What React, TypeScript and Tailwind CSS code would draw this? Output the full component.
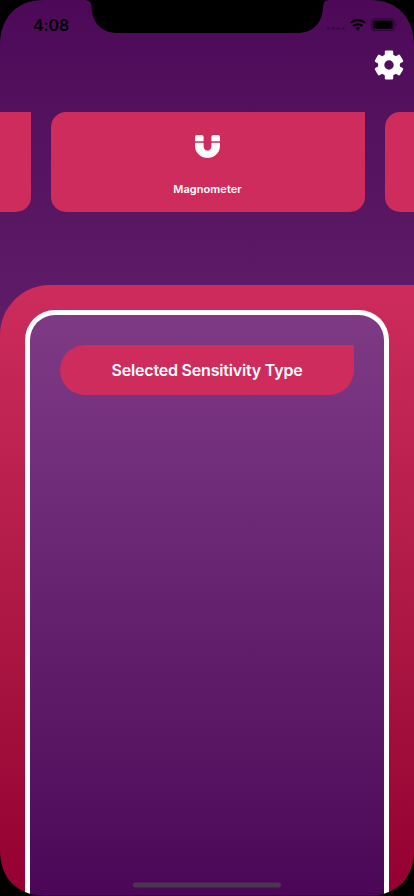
import { FaMagnet } from 'react-icons/fa';

function StatusBar() {
  return (
    <div className="flex h-[50px] shrink-0 items-start justify-between pl-[33px] pt-[15px] text-black">
      <span className="text-[16px] font-semibold leading-[20px] tracking-[-0.1px]">4:08</span>
      <svg width="88" height="20" viewBox="326 15 88 20">
        <g fill="#3a0744">
          <circle cx="328.3" cy="28.6" r="1.4" />
          <circle cx="333.3" cy="28.6" r="1.4" />
          <circle cx="338.3" cy="28.6" r="1.4" />
          <circle cx="343.3" cy="28.6" r="1.4" />
        </g>
        <g fill="none" stroke="#000" strokeWidth="2.1">
          <path d="M350.4 23.1a10.8 10.8 0 0 1 14.8 0" />
          <path d="M353.2 26a6.8 6.8 0 0 1 9.2 0" />
        </g>
        <path d="M357.8 30.4l-2.4-2.4a3.5 3.5 0 0 1 4.8 0z" />
        <rect x="371.8" y="18.8" width="22.4" height="11.6" rx="3" fill="none" stroke="#32063c" strokeWidth="1.2" />
        <rect x="373.3" y="20.4" width="19.4" height="8.4" rx="1.6" />
        <path d="M395.6 22.6c1.6.5 1.6 3.500 0 4z" fill="#32063c" />
      </svg>
    </div>
  );
}

function GearIcon() {
  return (
    <svg width="30" height="30" viewBox="-15 -15 30 30" fill="#fff">
      <circle r="7.8" fill="none" stroke="#fff" strokeWidth="6.2" />
      <rect x="-4.200" y="-14.500" width="8.400" height="7.500" rx="1.200" />
      <rect x="-4.200" y="-14.500" width="8.400" height="7.500" rx="1.200" transform="rotate(60)" />
      <rect x="-4.200" y="-14.500" width="8.400" height="7.500" rx="1.200" transform="rotate(120)" />
      <rect x="-4.200" y="-14.500" width="8.400" height="7.500" rx="1.200" transform="rotate(180)" />
      <rect x="-4.200" y="-14.500" width="8.400" height="7.500" rx="1.200" transform="rotate(240)" />
      <rect x="-4.200" y="-14.500" width="8.400" height="7.500" rx="1.200" transform="rotate(300)" />
    </svg>
  );
}

function DeviceFrame() {
  return (
    <svg className="pointer-events-none absolute inset-0" width="414" height="896" viewBox="0 0 414 896">
      <path
        fillRule="evenodd"
        d="M0 0H414V896H0ZM44 0C17 0 0 17 0 46V850C0 878 17 895.5 44 895.5H370C397 895.5 414 878 414 850V46C414 17 397 0 370 0Z"
      />
      <path d="M84 0C89 0 91.5 2.500 91.500 7C92 23 102 33 118 33H297C313 33 322.500 23 323 7C323 2.500 325.500 0 330 0Z" />
      <rect x="133" y="882.500" width="148" height="5" rx="2.500" fill="#4c3551" />
    </svg>
  );
}

export default function App() {
  return (
    <main className="relative flex h-[896px] w-[414px] flex-col overflow-hidden bg-linear-to-b from-[#4d0958] to-[#7f3a86] font-['Inter','Liberation_Sans',sans-serif]">
      <StatusBar />
      <header className="flex h-[62px] shrink-0 items-start justify-end pr-[10px]">
        <GearIcon />
      </header>
      <section className="flex h-[100px] shrink-0 justify-center gap-5 pl-[2px]">
        <div className="w-[314px] shrink-0 rounded-[15px] rounded-tr-none bg-[#cd2c5d]" />
        <div className="flex w-[314px] shrink-0 flex-col items-center rounded-[15px] rounded-tr-none bg-[#cd2c5d] pr-[1px] pt-[22px] text-white">
          <FaMagnet className="size-[25px]" />
          <span className="mt-[23px] text-[11px] font-semibold leading-[14px] tracking-[0.08px]">Magnometer</span>
        </div>
        <div className="w-[314px] shrink-0 rounded-[15px] rounded-tr-none bg-[#cd2c5d]" />
      </section>
      <section className="mt-[73px] flex min-h-0 flex-1 flex-col rounded-tl-[50px] bg-linear-to-b from-[#cd2c5d] to-[#930031] px-[25px] pt-[25px]">
        <div className="flex-1 rounded-t-[30px] border-x-[5px] border-t-[5px] border-white bg-linear-to-b from-[#7f3a86] to-[#4b0657] px-[30px] pt-[30px]">
          <div className="flex h-[50px] items-center justify-center rounded-[25px] rounded-tr-none bg-[#cd2c5d] text-[16px] font-semibold tracking-[-0.19px] text-white">
            Selected Sensitivity Type
          </div>
        </div>
      </section>
      <DeviceFrame />
    </main>
  );
}
